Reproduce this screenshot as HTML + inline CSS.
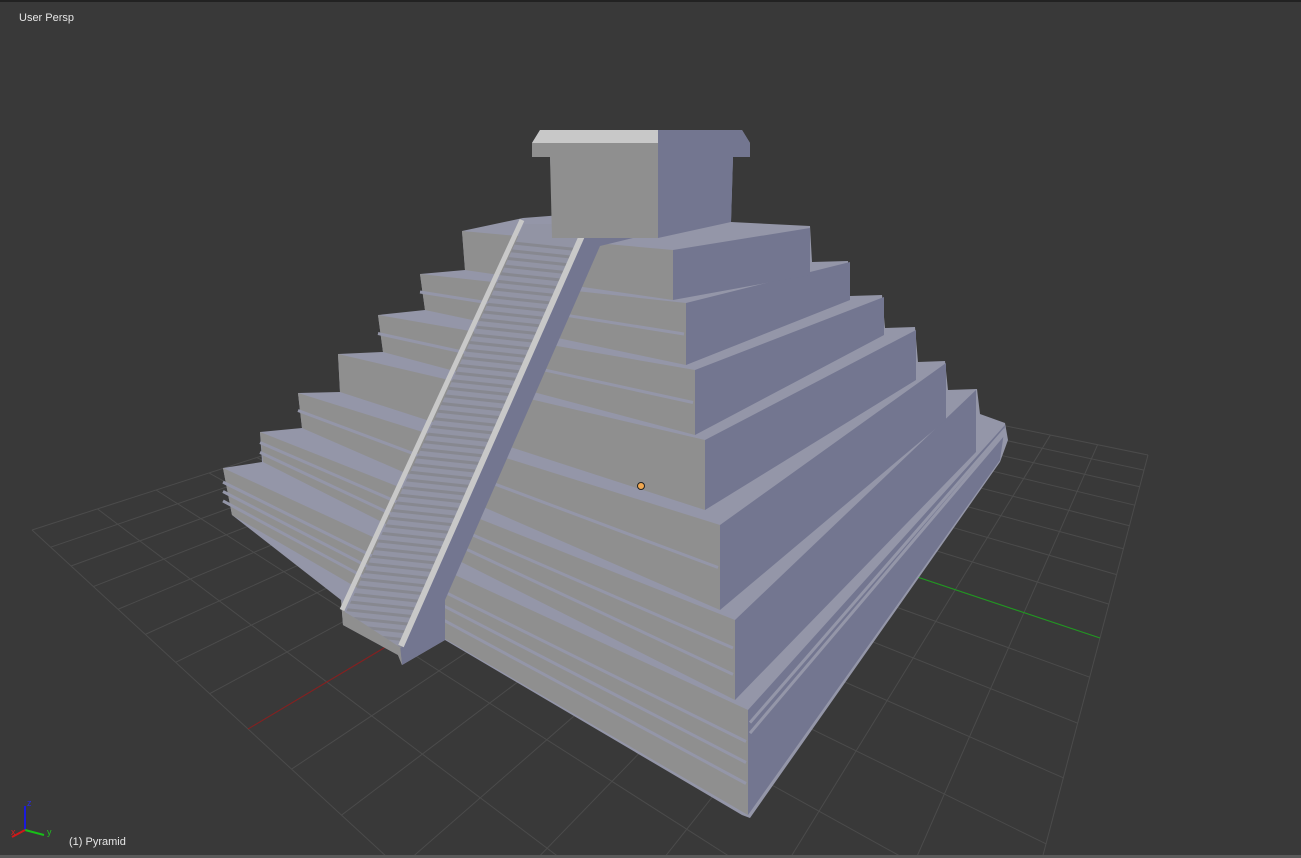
<!DOCTYPE html>
<html><head><meta charset="utf-8"><style>
html,body{margin:0;padding:0;background:#393939;overflow:hidden;width:1301px;height:858px;position:relative}
#v{position:absolute;left:0;top:0}
.t{position:absolute;font-family:"Liberation Sans",sans-serif;font-size:11px;line-height:13px;color:#e6e6e6}
</style></head><body>
<svg id="v" width="1301" height="858" viewBox="0 0 1301 858" xmlns="http://www.w3.org/2000/svg">
<rect width="1301" height="858" fill="#393939"/>
<rect width="1301" height="2" fill="#222"/>
<g id="grid" stroke="#4b4b4b" stroke-width="1" fill="none"></g>
<g id="axes"></g>
<polygon fill="#9496a8" points="540,130 742,130 750,143 750,157 733,157 731,222 810,226 812,262 848,261 850,296 882,295 885,328 915,327 918,362 945,361 948,390 977,389 980,414 1005,423 1008,440 1000,462 750,818 742,815 445,640 402,665 398,655 343,625 341,600 232,515 223,468 262,462 260,432 302,428 298,393 340,392 338,354 383,352 378,315 425,310 420,274 465,270 462,231 523,218 575,214 552,200 550,157 532,157 532,143"/>
<g fill="#737690">
<polygon points="748,710 1005,425 1000,460 748,815"/>
<polygon points="735,620 976,390 976,452 735,700"/>
<polygon points="720,525 946,363 946,420 720,610"/>
<polygon points="705,440 916,330 916,380 705,510"/>
<polygon points="695,370 884,297 884,335 695,435"/>
<polygon points="686,303 850,262 850,300 686,365"/>
<polygon points="673,250 810,228 810,275 673,300"/>
</g>
<g fill="#8f8f8f">
<polygon points="223,468 748,710 748,815 232,515"/>
<polygon points="260,432 735,620 735,700 263,462"/>
<polygon points="298,393 720,525 720,610 302,428"/>
<polygon points="338,354 705,440 705,510 340,392"/>
<polygon points="378,315 695,370 695,435 383,352"/>
<polygon points="420,274 686,303 686,365 425,310"/>
<polygon points="462,231 673,250 673,300 465,270"/>
</g>
<g id="stripes" stroke="#9496a8" stroke-width="3"></g>
<polygon fill="#737690" points="400,648 590,222 633,218 633,238 600,246 445,600 445,640 402,665"/>
<polygon fill="#8f8f8f" points="341,600 343,625 398,655 402,665 400,645 345,612"/>
<defs><clipPath id="sc"><polygon points="346,612 524,224 586,224 401,648"/></clipPath></defs>
<polygon fill="#9294a4" points="346,612 524,224 586,224 401,648"/>
<g id="steps" clip-path="url(#sc)" stroke="#878890" stroke-width="3"></g>
<line x1="342" y1="610" x2="522" y2="220" stroke="#c8c8c8" stroke-width="5"/>
<line x1="401" y1="646" x2="588" y2="222" stroke="#c8c8c8" stroke-width="6"/>
<polygon fill="#8f8f8f" points="550,157 658,157 658,238 552,238"/>
<polygon fill="#737690" points="658,157 733,157 731,222 658,238"/>
<polygon fill="#8f8f8f" points="532,143 658,143 658,157 532,157"/>
<polygon fill="#c8c8c8" points="532,143 540,130 658,130 658,143"/>
<polygon fill="#737690" points="658,130 742,130 750,143 750,157 658,157"/>
<circle cx="641" cy="486" r="3.5" fill="#f0a850" stroke="#222" stroke-width="1"/>
<line x1="25" y1="830" x2="25" y2="806" stroke="#1a1adc" stroke-width="2"/>
<line x1="25" y1="830" x2="44" y2="835" stroke="#18c018" stroke-width="2"/>
<line x1="25" y1="830" x2="12" y2="837" stroke="#d01818" stroke-width="2"/>
<text x="27" y="806" font-family="Liberation Sans,sans-serif" font-size="9" fill="#2a2ae0">z</text>
<text x="47" y="835" font-family="Liberation Sans,sans-serif" font-size="9" fill="#20c020">y</text>
<text x="11" y="835" font-family="Liberation Sans,sans-serif" font-size="9" fill="#d02020">x</text>
<rect y="855" width="1301" height="3" fill="#5a5a5a"/>
</svg>
<div class="t" style="left:19px;top:12px">User Persp</div>
<div class="t" style="left:69px;top:836px">(1) Pyramid</div>
<script>
(function(){
var NS="http://www.w3.org/2000/svg";
function ln(g,x1,y1,x2,y2,c){var l=document.createElementNS(NS,"line");l.setAttribute("x1",x1);l.setAttribute("y1",y1);l.setAttribute("x2",x2);l.setAttribute("y2",y2);if(c)l.setAttribute("stroke",c);g.appendChild(l);}
var src=[[0,0],[0.5,0],[1,0.5],[1,1]],dst=[[32,530],[248,729],[1100,638],[1148,455]];
var A=[],b=[];
for(var i=0;i<4;i++){var u=src[i][0],v=src[i][1],x=dst[i][0],y=dst[i][1];
A.push([u,v,1,0,0,0,-u*x,-v*x]);b.push(x);A.push([0,0,0,u,v,1,-u*y,-v*y]);b.push(y);}
var n=8;for(var c=0;c<n;c++){var p=c;for(var r=c+1;r<n;r++)if(Math.abs(A[r][c])>Math.abs(A[p][c]))p=r;
var t=A[c];A[c]=A[p];A[p]=t;t=b[c];b[c]=b[p];b[p]=t;
for(var r=0;r<n;r++){if(r==c)continue;var f=A[r][c]/A[c][c];for(var k=c;k<n;k++)A[r][k]-=f*A[c][k];b[r]-=f*b[c];}}
var h=[];for(var i=0;i<n;i++)h.push(b[i]/A[i][i]);
function H(u,v){var w=h[6]*u+h[7]*v+1;return[(h[0]*u+h[1]*v+h[2])/w,(h[3]*u+h[4]*v+h[5])/w];}
var g=document.getElementById("grid"),ax=document.getElementById("axes");
for(var i=0;i<=16;i++){var s=i/16;
var a=H(s,0),e=H(s,1);ln(g,a[0],a[1],e[0],e[1]);
a=H(0,s);e=H(1,s);ln(g,a[0],a[1],e[0],e[1]);}
var a=H(0.5,0),e=H(0.5,1);ln(ax,a[0],a[1],e[0],e[1],"#8a1c1c");
a=H(0,0.5);e=H(1,0.5);ln(ax,a[0],a[1],e[0],e[1],"#1e9a1e");
var T=[[223,468,232,515,748,710,748,815,[0.3,0.5,0.7]],[260,432,263,462,735,620,735,700,[0.35,0.68]],[298,393,302,428,720,525,720,610,[0.5]],[420,274,425,310,686,303,686,365,[0.5]],[378,315,383,352,695,370,695,435,[0.5]]];
var sg=document.getElementById("stripes");
T.forEach(function(q){q[8].forEach(function(f){ln(sg,q[0],q[1]+(q[3]-q[1])*f,q[4]-2,q[5]+(q[7]-q[5])*f);});});
var R=[[748,710,748,815,1005,425,1000,460,[0.12,0.22]]];
R.forEach(function(q){q[8].forEach(function(f){var l=ln(sg,q[0]+2,q[1]+(q[3]-q[1])*f,q[4],q[5]+(q[7]-q[5])*f);});});
var st=document.getElementById("steps");
for(var y=224;y<660;y+=8){ln(st,330,y,600,y+28);}
})();
</script>
</body></html>
